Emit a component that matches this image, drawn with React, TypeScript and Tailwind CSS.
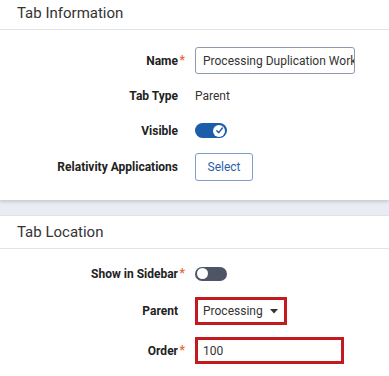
import { ReactNode } from 'react';

function Row({ label, required, children, className = '' }: { label: string; required?: boolean; children: ReactNode; className?: string }) {
  return (
    <div className={`flex items-center ${className}`}>
      <div className="relative w-[178px] text-right text-[12px] font-bold text-[#222]">
        {label}
        {required && <span className="absolute -right-[7px] top-[-1px] text-[#e8672d]">*</span>}
      </div>
      <div className="ml-[17px] flex items-center">{children}</div>
    </div>
  );
}

function Toggle({ on }: { on: boolean }) {
  if (on) {
    return (
      <div className="flex h-[15px] w-[32px] items-center justify-end rounded-full bg-[#1c5ca8] pr-[2px]">
        <div className="flex h-[12px] w-[12px] items-center justify-center rounded-full bg-white">
          <svg width="9" height="9" viewBox="0 0 10 10" fill="none">
            <path d="M2 5.2 L4.2 7.4 L8.2 2.2" stroke="#1c5ca8" strokeWidth="1.6" strokeLinecap="round" strokeLinejoin="round" />
          </svg>
        </div>
      </div>
    );
  }
  return (
    <div className="flex h-[14px] w-[32px] items-center rounded-full bg-[#4d5566] pl-[2px]">
      <div className="h-[11px] w-[11px] rounded-full bg-white" />
    </div>
  );
}

export default function App() {
  return (
    <div className="h-[376px] w-[389px] overflow-hidden bg-white font-['Roboto',sans-serif]">
      {/* Tab Information */}
      <div className="relative z-10 bg-white shadow-[0_2px_3px_rgba(0,0,0,0.15)]">
        <div className="flex h-[30px] items-center border-b border-[#dfe4ec] pl-[17px] pb-[3px] text-[15px] text-[#333]">
          Tab Information
        </div>
        <div className="flex flex-col pt-[17px] pb-[19px]">
          <Row label="Name" required className="h-[27px]">
            <div className="flex h-[27px] w-[160px] items-center overflow-hidden whitespace-nowrap rounded-[3px] border border-[#8f99a8] pl-[7px] text-[12px] text-[#333]">
              Processing Duplication Workspace
            </div>
          </Row>
          <Row label="Tab Type" className="mt-[8px] h-[27px]">
            <span className="text-[12px] text-[#333]">Parent</span>
          </Row>
          <Row label="Visible" className="mt-[8px] h-[27px]">
            <Toggle on />
          </Row>
          <Row label="Relativity Applications" className="mt-[9px] h-[28px]">
            <button className="h-[28px] w-[58px] rounded-[3px] border border-[#7d9dcc] text-[12px] text-[#2a5ea8]">Select</button>
          </Row>
        </div>
      </div>

      <div className="h-[15px] bg-[#e9edf3]" />

      {/* Tab Location */}
      <div className="border-t border-[#dfe4ec] bg-white">
        <div className="flex h-[33px] items-center border-b border-[#dfe4ec] pl-[17px] text-[15px] text-[#333]">
          Tab Location
        </div>
        <div className="flex flex-col pt-[11px]">
          <Row label="Show in Sidebar" required className="h-[27px]">
            <Toggle on={false} />
          </Row>
          <Row label="Parent" className="mt-[10px] h-[28px]">
            <div className="flex h-[28px] w-[92px] items-center border-[3px] border-[#c41a1f] pl-[5px] text-[12px] text-[#333]">
              Processing
              <svg className="ml-[7px]" width="8" height="5" viewBox="0 0 8 5">
                <path d="M0 0 L8 0 L4 4.5 Z" fill="#333" />
              </svg>
            </div>
          </Row>
          <Row label="Order" required className="mt-[12px] h-[27px]">
            <div className="flex h-[27px] w-[149px] items-center border-[3px] border-[#c41a1f] pl-[5px] text-[12px] text-[#333]">
              100
            </div>
          </Row>
        </div>
      </div>
    </div>
  );
}
